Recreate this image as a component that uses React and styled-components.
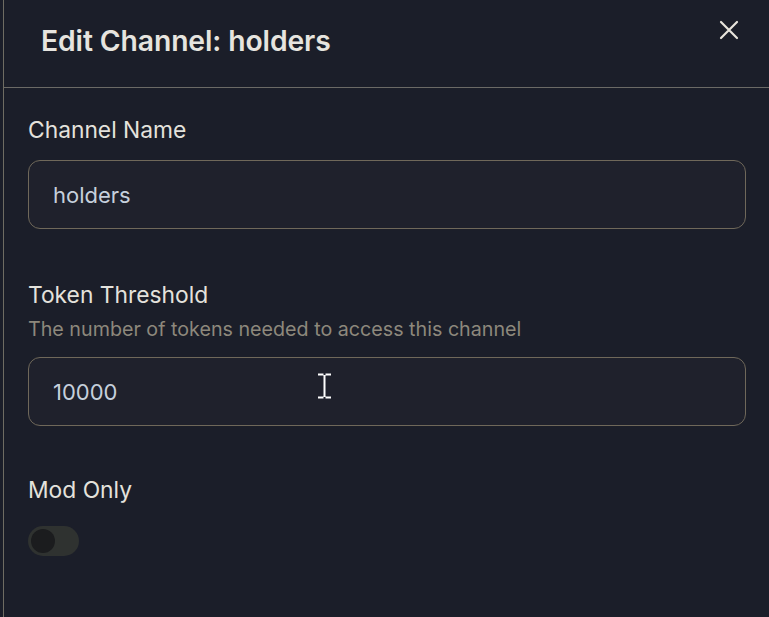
import React from 'react'
import styled, { createGlobalStyle } from 'styled-components'

const GlobalStyle = createGlobalStyle`
  html, body {
    margin: 0;
    padding: 0;
    background: #1b1e29;
    font-family: Inter, "Noto Sans", sans-serif;
  }
  * { box-sizing: border-box; }
`

const Page = styled.div`
  display: flex;
  height: 617px;
  padding-left: 3px;
  background: #1b1e29;
`

const Panel = styled.div`
  flex: 1;
  display: flex;
  flex-direction: column;
  border-left: 1px solid #6e6c62;
  background: #1b1e29;
`

const Header = styled.div`
  display: flex;
  align-items: flex-start;
  justify-content: space-between;
  height: 88px;
  padding: 23px 30px 0 37px;
  border-bottom: 1px solid #6b6a66;
`

const Title = styled.h2`
  margin: 0;
  font-size: 28.3px;
  font-weight: 600;
  letter-spacing: -0.1px;
  color: #e6e4df;
  line-height: 36px;
`

const CloseButton = styled.button`
  background: none;
  border: none;
  padding: 0;
  margin-top: -3px;
  color: #e8e5dd;
  cursor: pointer;
  display: flex;
`

const Body = styled.div`
  display: flex;
  flex-direction: column;
  gap: 52px;
  padding: 28px 23px 0 24px;
`

const Field = styled.div`
  display: flex;
  flex-direction: column;
  margin-top: ${p => p.$shift || 0}px;
`

const Label = styled.label`
  font-size: 22.8px;
  font-weight: 400;
  color: #e4e2dc;
  line-height: 28px;
`

const Hint = styled.div`
  font-size: 19.7px;
  color: #8d887c;
  line-height: 24px;
  margin-top: 8px;
`

const InputWrap = styled.div`
  position: relative;
  margin-top: ${p => p.$gap}px;
`

const Input = styled.input`
  width: 100%;
  height: 69px;
  padding: 0 24px;
  border: 1px solid #6f685a;
  border-radius: 12px;
  background: #1f212c;
  color: #c6d0dc;
  font-family: inherit;
  font-size: 22px;
  outline: none;
`

const Cursor = styled.svg`
  position: absolute;
  left: 289px;
  top: 16px;
  pointer-events: none;
`

const Toggle = styled.div`
  margin-top: 22px;
  width: 51px;
  height: 30px;
  border-radius: 15px;
  background: #2f3230;
  padding: 3px;
  display: flex;
`

const Knob = styled.div`
  width: 24px;
  height: 24px;
  border-radius: 50%;
  background: #1b1c1e;
`

const CloseIcon = () => (
  <svg width="20" height="20" viewBox="0 0 20 20" fill="none" stroke="currentColor" strokeWidth="2.2" strokeLinecap="round">
    <path d="M2 2 L18 18 M18 2 L2 18" />
  </svg>
)

const App = () => (
  <>
    <GlobalStyle />
    <Page>
      <Panel>
        <Header>
          <Title>Edit Channel: holders</Title>
          <CloseButton aria-label="Close">
            <CloseIcon />
          </CloseButton>
        </Header>
        <Body>
          <Field>
            <Label>Channel Name</Label>
            <InputWrap $gap={16}>
              <Input defaultValue="holders" />
            </InputWrap>
          </Field>
          <Field>
            <Label>Token Threshold</Label>
            <Hint>The number of tokens needed to access this channel</Hint>
            <InputWrap $gap={16}>
              <Input defaultValue="10000" />
              <Cursor width="15" height="26" viewBox="0 0 15 26">
                <path d="M1 1.5 H6.5 M8.5 1.5 H14 M7.5 2 V24 M1 24.5 H6.5 M8.5 24.5 H14" stroke="#ffffff" strokeWidth="2" />
              </Cursor>
            </InputWrap>
          </Field>
          <Field $shift={-2}>
            <Label>Mod Only</Label>
            <Toggle>
              <Knob />
            </Toggle>
          </Field>
        </Body>
      </Panel>
    </Page>
  </>
)

export default App
